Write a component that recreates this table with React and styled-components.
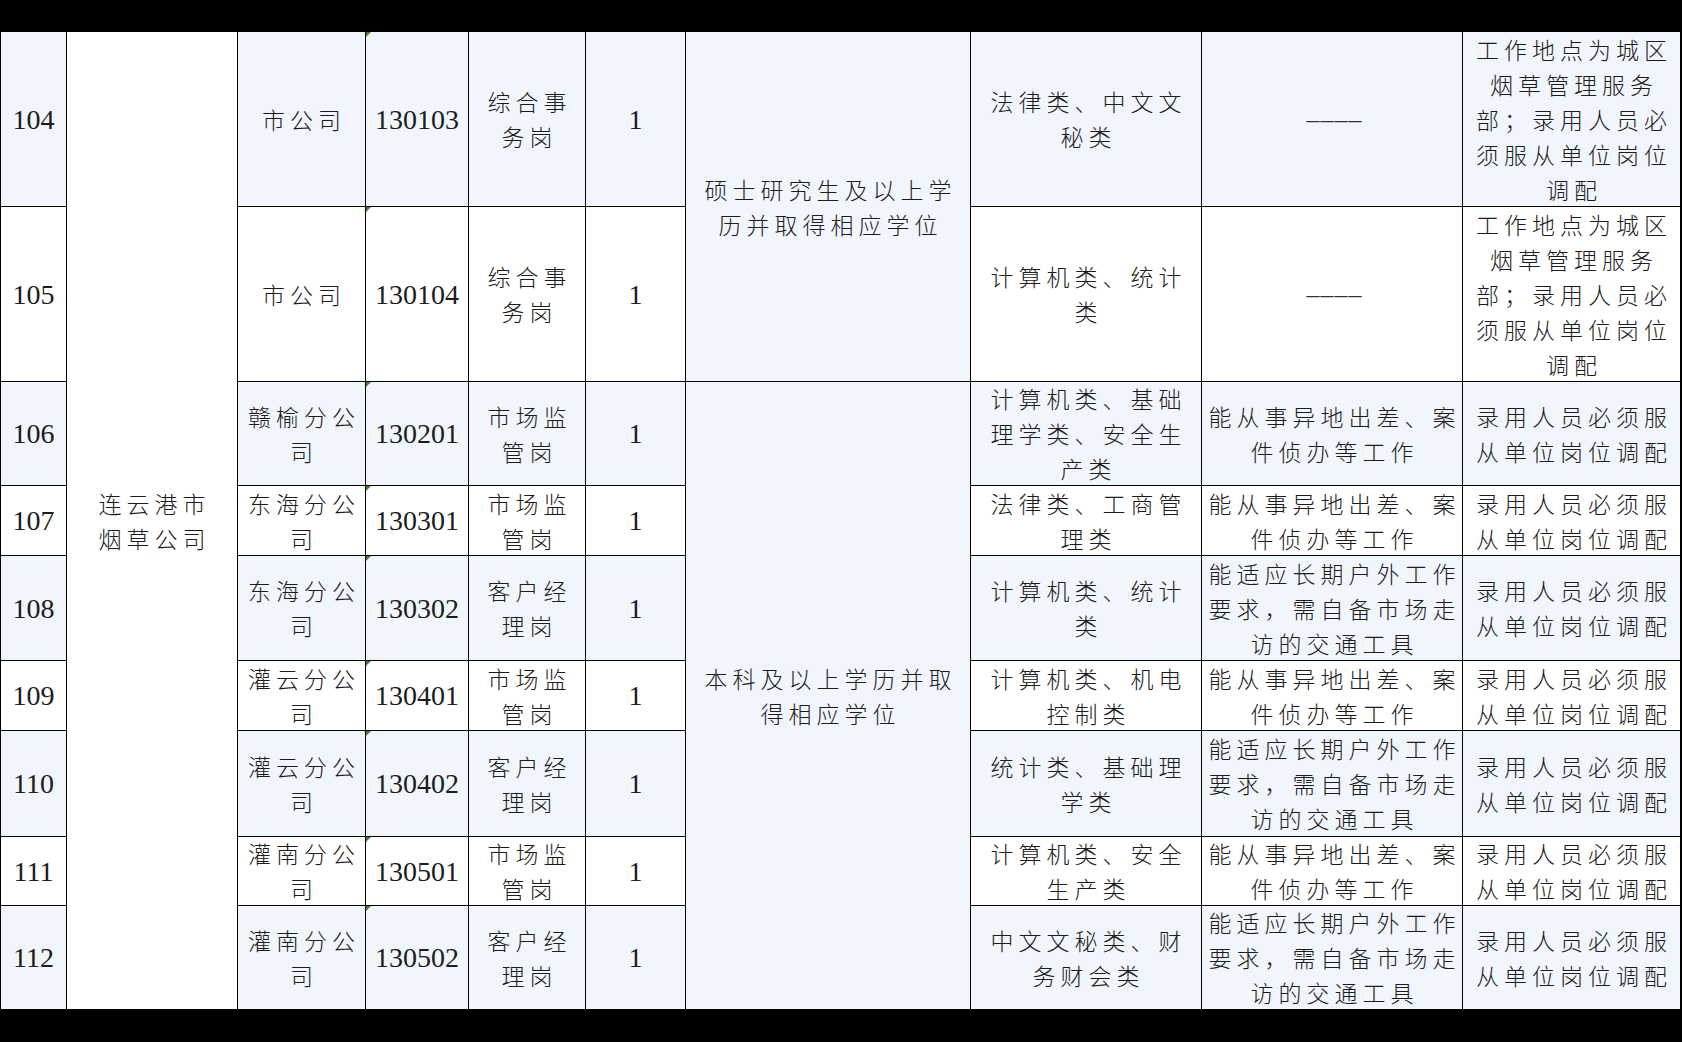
import React from 'react'
import styled, { createGlobalStyle } from 'styled-components'

const GlobalStyle = createGlobalStyle`
    html, body {
        margin: 0;
        padding: 0;
        background: #000;
    }
`

const LIGHT = '#f1f6fc'

const Frame = styled.div`
    width: 1682px;
    height: 1042px;
    padding-top: 31px;
    box-sizing: border-box;
    overflow: hidden;
    background: #000;
`

const Sheet = styled.div`
    display: grid;
    grid-template-columns: 66px 171px 128px 103px 117px 100px 285px 231px 261px 218px;
    grid-template-rows: 175px 175px 104px 70px 105px 70px 106px 69px 104px;
    width: max-content;
    border-top: 1px solid #000;
    border-left: 1px solid #000;
    background: #fff;
`

const Cell = styled.div`
    position: relative;
    box-sizing: border-box;
    display: flex;
    align-items: center;
    justify-content: center;
    text-align: center;
    border-right: 1px solid #000;
    border-bottom: 1px solid #000;
    background: ${p => (p.$light ? LIGHT : '#fff')};
    grid-row: ${p => (p.$rows ? `span ${p.$rows}` : 'auto')};
    color: #1c1c1c;
    white-space: pre;
    ${p => p.$num
        ? `
        font-family: "Liberation Serif", "Times New Roman", serif;
        font-size: 28px;
        line-height: 35px;
        `
        : `
        font-family: "Noto Sans CJK SC", "Noto Sans", sans-serif;
        font-weight: 300;
        font-size: 23px;
        line-height: 35px;
        letter-spacing: 5px;
        padding-left: 5px;
        `}
`

// excel "number stored as text" marker
const CodeCell = styled(Cell)`
    &::before {
        content: '';
        position: absolute;
        top: 0;
        left: 0;
        border-top: 5px solid #3f7f2a;
        border-right: 5px solid transparent;
    }
`

const Dash = styled.span`
    font-family: "Liberation Serif", "Times New Roman", serif;
    font-weight: 400;
    font-size: 26px;
    letter-spacing: 1px;
    color: #333;
`

const COMPANY = '连云港市\n烟草公司'
const MASTER = '硕士研究生及以上学\n历并取得相应学位'
const BACHELOR = '本科及以上学历并取\n得相应学位'
const CITY_NOTE = '工作地点为城区\n烟草管理服务\n部；录用人员必\n须服从单位岗位\n调配'
const NOTE = '录用人员必须服\n从单位岗位调配'
const CASE_REQ = '能从事异地出差、案\n件侦办等工作'
const FIELD_REQ = '能适应长期户外工作\n要求，需自备市场走\n访的交通工具'
const NONE = <Dash>––––</Dash>

const rows = [
    { no: '104', unit: '市公司', code: '130103', post: '综合事\n务岗', major: '法律类、中文文\n秘类', req: NONE, note: CITY_NOTE },
    { no: '105', unit: '市公司', code: '130104', post: '综合事\n务岗', major: '计算机类、统计\n类', req: NONE, note: CITY_NOTE },
    { no: '106', unit: '赣榆分公\n司', code: '130201', post: '市场监\n管岗', major: '计算机类、基础\n理学类、安全生\n产类', req: CASE_REQ, note: NOTE },
    { no: '107', unit: '东海分公\n司', code: '130301', post: '市场监\n管岗', major: '法律类、工商管\n理类', req: CASE_REQ, note: NOTE },
    { no: '108', unit: '东海分公\n司', code: '130302', post: '客户经\n理岗', major: '计算机类、统计\n类', req: FIELD_REQ, note: NOTE },
    { no: '109', unit: '灌云分公\n司', code: '130401', post: '市场监\n管岗', major: '计算机类、机电\n控制类', req: CASE_REQ, note: NOTE },
    { no: '110', unit: '灌云分公\n司', code: '130402', post: '客户经\n理岗', major: '统计类、基础理\n学类', req: FIELD_REQ, note: NOTE },
    { no: '111', unit: '灌南分公\n司', code: '130501', post: '市场监\n管岗', major: '计算机类、安全\n生产类', req: CASE_REQ, note: NOTE },
    { no: '112', unit: '灌南分公\n司', code: '130502', post: '客户经\n理岗', major: '中文文秘类、财\n务财会类', req: FIELD_REQ, note: NOTE },
]

export default function App() {
    return (
        <Frame>
            <GlobalStyle />
            <Sheet>
                {rows.map((r, i) => {
                    const light = i % 2 === 0
                    return (
                        <React.Fragment key={r.no}>
                            <Cell $num $light={light}>{r.no}</Cell>
                            {i === 0 && <Cell $rows={9}>{COMPANY}</Cell>}
                            <Cell $light={light}>{r.unit}</Cell>
                            <CodeCell $num $light={light}>{r.code}</CodeCell>
                            <Cell $light={light}>{r.post}</Cell>
                            <Cell $num $light={light}>1</Cell>
                            {i === 0 && <Cell $rows={2} $light>{MASTER}</Cell>}
                            {i === 2 && <Cell $rows={7} $light>{BACHELOR}</Cell>}
                            <Cell $light={light}>{r.major}</Cell>
                            <Cell $light={light}>{r.req}</Cell>
                            <Cell $light={light}>{r.note}</Cell>
                        </React.Fragment>
                    )
                })}
            </Sheet>
        </Frame>
    )
}
